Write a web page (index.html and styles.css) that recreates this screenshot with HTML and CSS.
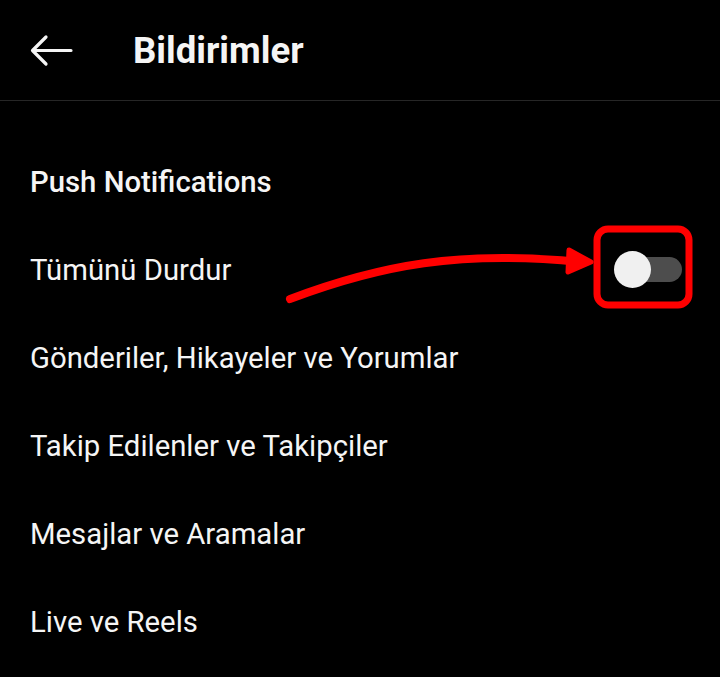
FILE: index.html
```html
<html>
<head>
<meta charset="utf-8">
<link rel="stylesheet" href="styles.css">
</head>
<body>
	<div class="topbar">
		<div class="back">
			<svg width="44" height="34" viewBox="0 0 44 34">
				<path d="M42 16.5 H4 M17 3 L3.5 16.5 L17 30" fill="none" stroke="#f5f5f5" stroke-width="3.2" stroke-linecap="round" stroke-linejoin="round"/>
			</svg>
		</div>
		<div class="title">Bildirimler</div>
	</div>

	<div class="section">
		<div class="row heading">Push Notifications</div>
		<div class="row">
			<span>Tümünü Durdur</span>
			<div class="toggle">
				<div class="track"></div>
				<div class="knob"></div>
			</div>
		</div>
		<div class="row">Gönderiler, Hikayeler ve Yorumlar</div>
		<div class="row">Takip Edilenler ve Takipçiler</div>
		<div class="row">Mesajlar ve Aramalar</div>
		<div class="row">Live ve Reels</div>
	</div>

	<svg class="marks" width="720" height="677" viewBox="0 0 720 677">
		<rect x="597" y="229" width="92" height="76" rx="11" fill="none" stroke="#ff0000" stroke-width="7"/>
		<path d="M290 299 C 380 265, 460 250, 580 262" fill="none" stroke="#ff0000" stroke-width="8" stroke-linecap="round"/>
		<path d="M569 250 L591 262 L568 272 Z" fill="#ff0000" stroke="#ff0000" stroke-width="5" stroke-linejoin="round"/>
	</svg>
</body>
</html>
```

FILE: styles.css
```css
body {
	margin: 0;
	background-color: #000000;
	color: #f5f5f5;
	font-family: Roboto, "Noto Sans", sans-serif;
	width: 720px;
	height: 677px;
	overflow: hidden;
	position: relative;
}

.topbar {
	display: flex;
	align-items: center;
	height: 100px;
	border-bottom: 1px solid #262626;
}

.back {
	display: flex;
	margin-left: 29px;
	margin-top: 1px;
}

.title {
	font-size: 36.6px;
	font-weight: bold;
	margin-left: 60px;
}

.section {
	padding-top: 37px;
}

.row {
	display: flex;
	align-items: center;
	justify-content: space-between;
	height: 88px;
	padding-left: 30px;
	padding-right: 38px;
	font-size: 29.3px;
}

.heading {
	font-weight: 500;
}

.toggle {
	position: relative;
	width: 68px;
	height: 37px;
	margin-top: -2px;
}

.track {
	position: absolute;
	left: 4px;
	right: 0;
	top: 6px;
	height: 25px;
	border-radius: 13px;
	background-color: #4d4d4d;
}

.knob {
	position: absolute;
	left: 0;
	top: 0;
	width: 37px;
	height: 37px;
	border-radius: 50%;
	background-color: #f0f0f0;
}

.marks {
	position: absolute;
	top: 0;
	left: 0;
}
```
